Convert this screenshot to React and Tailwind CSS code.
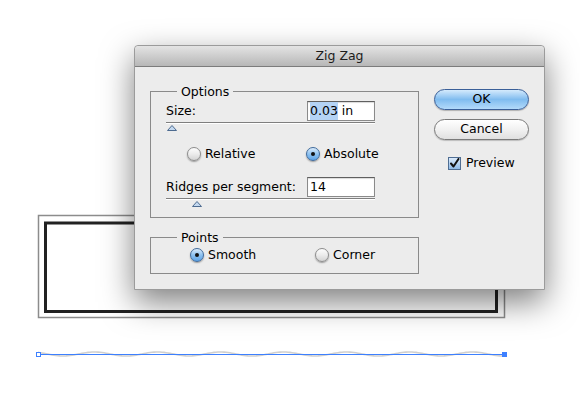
import clsx from "clsx";

function wavePoints() {
  const pts = [];
  for (let x = 38; x <= 505; x += 2) {
    const y = 354 + 2 * Math.sin((2 * Math.PI * (x - 47.25)) / 63);
    pts.push(`${x},${y.toFixed(2)}`);
  }
  return pts.join(" ");
}

function Artwork() {
  return (
    <svg className="absolute inset-0" width="580" height="407">
      <rect x="38.5" y="215.5" width="466" height="102" fill="none" stroke="#8c8c8c" strokeWidth="1.5" />
      <rect x="45.5" y="223" width="451" height="88.5" fill="none" stroke="#222" strokeWidth="3" />
      <polyline points={wavePoints()} fill="none" stroke="#cfcfcf" strokeWidth="1.6" />
      <line x1="39" y1="354.5" x2="504" y2="354.5" stroke="#3d80ff" strokeWidth="1" />
      <rect x="36.5" y="352.5" width="4" height="4" fill="#fff" stroke="#3d80ff" />
      <rect x="502" y="352" width="5" height="5" fill="#3d80ff" />
    </svg>
  );
}

function Radio({ checked, label, className }) {
  return (
    <span className={clsx("flex items-center gap-[4px] shrink-0", className)}>
      <span
        className={clsx(
          "w-[14px] h-[14px] rounded-full border flex items-center justify-center shadow-[0_1px_1.5px_rgba(0,0,0,0.35)]",
          checked
            ? "border-[#3f6a9c] bg-linear-to-b from-[#dcecfb] via-[#8ec2f0] to-[#5da4e8]"
            : "border-[#8d8d8d] bg-linear-to-b from-[#fdfdfd] via-[#ececec] to-[#d4d4d4]"
        )}
      >
        {checked && <span className="w-[4px] h-[4px] rounded-full bg-[#111]" />}
      </span>
      <span className="whitespace-nowrap">{label}</span>
    </span>
  );
}

function Slider({ at }) {
  return (
    <div className="mt-[1px]">
      <div className="h-[2px] border-t border-t-[#7f7f7f] border-b border-b-white" />
      <svg className={clsx("mt-[1px]", at)} width="10" height="6">
        <polygon points="5,0.5 9.5,5.5 0.5,5.5" fill="#c3d8ef" stroke="#4d6b90" strokeWidth="1" />
      </svg>
    </div>
  );
}

function Field({ children }) {
  return (
    <div className="w-[68px] h-[20px] shrink-0 bg-white border border-[#8a8a8a] border-t-[#5f5f5f] shadow-[inset_0_1px_1px_rgba(0,0,0,0.15)] flex items-center pl-[2px]">
      {children}
    </div>
  );
}

export default function App() {
  return (
    <div className="relative w-[580px] h-[407px] bg-white overflow-hidden font-['DejaVu_Sans',sans-serif] text-[12.5px] text-black">
      <Artwork />

      <div className="absolute left-[134px] top-[45px] w-[411px] h-[245px] bg-[#ececec] border border-[#9b9b9b] rounded-t-[4px] shadow-[0_12px_32px_rgba(0,0,0,0.5)] flex flex-col">
        <div className="h-[21px] shrink-0 rounded-t-[4px] border-b border-[#7c7c7c] bg-linear-to-b from-[#e4e4e4] to-[#b7b7b7] flex items-center justify-center text-[#1c1c1c]">
          Zig Zag
        </div>

        <div className="flex pl-[15px] pt-[17px]">
          <div className="w-[269px] shrink-0 flex flex-col">
            <fieldset className="min-w-0 border border-[#8a8a8a] pl-[15px] pr-[43px] pb-[10px]">
              <legend className="ml-[11px] px-[4px] leading-[15px]">Options</legend>

              <div className="flex items-center justify-between mt-[2px] h-[20px]">
                <span>Size:</span>
                <Field>
                  <span className="bg-[#b4d3f5]">0.03</span>
                  <span>&nbsp;in</span>
                </Field>
              </div>
              <Slider at="ml-[1px]" />

              <div className="flex items-center mt-[16px] h-[14px] pl-[21px]">
                <Radio label="Relative" className="w-[119px]" />
                <Radio checked label="Absolute" />
              </div>

              <div className="flex items-center justify-between mt-[16px] h-[20px]">
                <span>Ridges per segment:</span>
                <Field>
                  <span>14</span>
                </Field>
              </div>
              <Slider at="ml-[26px]" />
            </fieldset>

            <fieldset className="min-w-0 mt-[12px] border border-[#8a8a8a] pl-[15px] pr-[43px] pb-[11px]">
              <legend className="ml-[11px] px-[4px] leading-[15px]">Points</legend>
              <div className="flex items-center mt-[3px] h-[14px] pl-[24px]">
                <Radio checked label="Smooth" className="w-[125px]" />
                <Radio label="Corner" />
              </div>
            </fieldset>
          </div>

          <div className="ml-[15px] w-[95px] flex flex-col">
            <button className="mt-[5px] h-[21px] rounded-full border border-[#3a5f98] bg-linear-to-b from-[#d4eafc] via-[#80bcef] to-[#b3dafa] shadow-[0_1px_1px_rgba(0,0,0,0.25)] flex items-center justify-center leading-none">
              OK
            </button>
            <button className="mt-[9px] h-[21px] rounded-full border border-[#7a7a7a] bg-linear-to-b from-white via-[#f1f1f1] to-[#e0e0e0] shadow-[0_1px_1px_rgba(0,0,0,0.2)] flex items-center justify-center leading-none">
              Cancel
            </button>
            <label className="mt-[16px] ml-[14px] flex items-center gap-[5px] h-[14px]">
              <span className="w-[13px] h-[13px] border border-[#4f6d92] bg-linear-to-b from-[#dbeafa] to-[#8fbbe8] flex items-center justify-center">
                <svg width="11" height="11" viewBox="0 0 11 11">
                  <path d="M2 5.5 L4.5 8.5 L9.5 1" fill="none" stroke="#111" strokeWidth="2" strokeLinecap="round" strokeLinejoin="round" />
                </svg>
              </span>
              <span>Preview</span>
            </label>
          </div>
        </div>
      </div>
    </div>
  );
}
